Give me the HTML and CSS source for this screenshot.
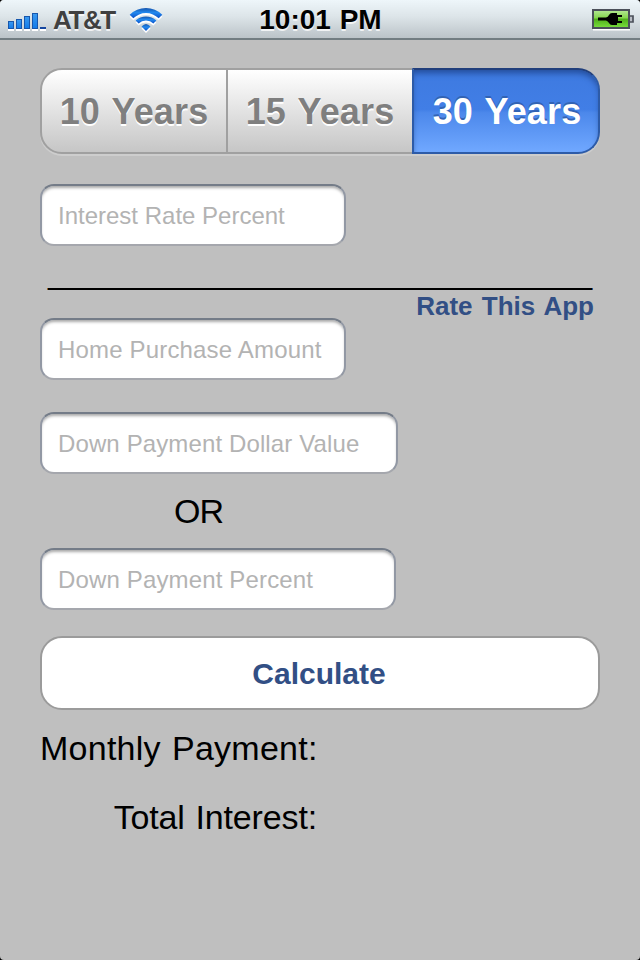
FILE: index.html
```html
<!DOCTYPE html>
<html lang="en">
<head>
<meta charset="utf-8">
<title>Mortgage Calculator</title>
<link rel="stylesheet" href="styles.css">
</head>
<body>
<div class="screen">
  <header class="status">
    <div class="status-left">
      <svg class="signal" width="40" height="18" viewBox="0 0 40 18">
        <defs>
          <linearGradient id="bar" x1="0" y1="0" x2="0" y2="1"><stop offset="0" stop-color="#3b9af0"/><stop offset="1" stop-color="#117bea"/></linearGradient>
        </defs>
        <path d="M0 17h6M8 17h6M16 17h6M24 17h6M32 17h6" stroke="#fff" stroke-width="2"/>
        <g fill="url(#bar)" stroke="#1757ad" stroke-width="1">
          <rect x=".5" y="8.5" width="5" height="7"/>
          <rect x="8.5" y="6.5" width="5" height="9"/>
          <rect x="16.5" y="3.5" width="5" height="12"/>
          <rect x="24.5" y=".5" width="5" height="15"/>
        </g>
        <rect x="32" y="14" width="6" height="2" fill="#1547a0"/>
      </svg>
      <span class="carrier">AT&amp;T</span>
      <svg class="wifi" width="34" height="27" viewBox="0 0 34 27">
        <defs>
          <linearGradient id="wave" x1="0" y1="0" x2="0" y2="1"><stop offset="0" stop-color="#1554ad"/><stop offset=".45" stop-color="#2389ee"/><stop offset="1" stop-color="#0b50c8"/></linearGradient>
        </defs>
        <g fill="#fff" transform="translate(0 2)">
          <path d="M.7 7.700A23 23 0 0 1 33.300 7.700L29.700 11.300A18 18 0 0 0 4.300 11.300Z"/>
          <path d="M6.600 13.600A15 15 0 0 1 27.400 13.600L24.400 16.600A10.500 10.500 0 0 0 9.600 16.600Z"/>
          <path d="M12.500 19.500Q17 14.500 21.500 19.500L17 24Z"/>
        </g>
        <g fill="url(#wave)">
          <path d="M.7 7.700A23 23 0 0 1 33.300 7.700L29.700 11.300A18 18 0 0 0 4.300 11.300Z"/>
          <path d="M6.600 13.600A15 15 0 0 1 27.400 13.600L24.400 16.600A10.500 10.500 0 0 0 9.600 16.600Z"/>
          <path d="M12.500 19.500Q17 14.500 21.500 19.500L17 24Z"/>
        </g>
      </svg>
    </div>
    <span class="clock">10:01 PM</span>
    <svg class="battery" width="43" height="22" viewBox="0 0 43 22">
      <defs>
        <linearGradient id="cell" x1="0" y1="0" x2="0" y2="1"><stop offset="0" stop-color="#b5e896"/><stop offset=".45" stop-color="#84d64c"/><stop offset=".5" stop-color="#4eae19"/><stop offset="1" stop-color="#7be03f"/></linearGradient>
      </defs>
      <path d="M1 20.700h37" stroke="#fff" stroke-width="1.400"/>
      <rect x="1" y="1" width="36" height="18" fill="url(#cell)" stroke="#4b505a" stroke-width="2"/>
      <path d="M38 7h3v6h-3" fill="#b8bcc4" stroke="#4b505a" stroke-width="1.700"/>
      <path d="M6 8.500h8q2-.5 3-2.500t3-2h5v2h5v2h-4v4h4v2h-5v2h-5q-2 0-3-2t-3-2.500H6z" fill="#000"/>
    </svg>
  </header>

  <main class="form">
    <div class="segments">
      <button class="segment">10 Years</button>
      <button class="segment">15 Years</button>
      <button class="segment selected">30 Years</button>
    </div>

    <input class="field rate" placeholder="Interest Rate Percent">
    <div class="rule">_________________________________</div>
    <a class="rate-link">Rate This App</a>
    <input class="field home" placeholder="Home Purchase Amount">
    <input class="field dollars" placeholder="Down Payment Dollar Value">
    <div class="or">OR</div>
    <input class="field percent" placeholder="Down Payment Percent">
    <button class="calculate">Calculate</button>

    <div class="results">
      <div class="result monthly">Monthly Payment:</div>
      <div class="result total">Total Interest:</div>
    </div>
  </main>
</div>
</body>
</html>
```
FILE: styles.css
```css
* { box-sizing: border-box; }

body {
  margin: 0;
  background: #000;
  font-family: "Liberation Sans", Arial, sans-serif;
}

.screen {
  width: 640px;
  height: 960px;
  overflow: hidden;
  background: #bfbfbf;
  border-radius: 4px;
  color: #000;
}

.status {
  display: grid;
  grid-template-columns: 1fr auto 1fr;
  align-items: start;
  height: 40px;
  padding: 0 5px 0 8px;
  background: linear-gradient(#eef6fa, #dce4e8 45%, #bbc3c8);
  border-bottom: 2px solid #727d82;
  font-weight: bold;
  line-height: 40px;
  text-shadow: 0 2px 0 rgba(255, 255, 255, .75);
}

.status-left { display: flex; }
.signal { margin-top: 13px; }

.carrier {
  width: 63px;
  margin-left: 5px;
  color: #404040;
  font-size: 26px;
  letter-spacing: -1.4px;
}

.wifi { margin: 7px 0 0 13px; }
.clock { margin-right: 2px; font-size: 28px; word-spacing: 1px; }
.battery { justify-self: end; margin: 9px 0 0; }

.form {
  display: flex;
  flex-direction: column;
  align-items: flex-start;
  padding: 28px 40px 0;
}

button, input {
  margin: 0;
  padding: 0;
  border: 0;
  font-family: inherit;
}

.segments {
  display: grid;
  grid-template-columns: 188px 184px 188px;
  width: 560px;
  height: 86px;
  border-radius: 22px;
  box-shadow: 0 2px 0 #cdcdcd;
}

.segment {
  padding-top: 2px;
  background: linear-gradient(#fff, #c6c6c6);
  border: solid #a0a0a0;
  border-width: 2px 2px 2px 0;
  color: #7f7f7f;
  font-size: 36px;
  font-weight: bold;
  text-shadow: 0 2px 0 #fff;
  letter-spacing: .15px;
  word-spacing: 2px;
}

.segment:first-child { border-left-width: 2px; border-radius: 22px 0 0 22px; }
.segment:nth-child(2) { border-right: 0; }

.segment.selected {
  padding-left: 2px;
  background: linear-gradient(#3e7ae0, #417ee6 48%, #4c88eb 52%, #70a8ff);
  border: 2px solid #2d5ba8;
  border-top-color: #213f7c;
  border-radius: 0 22px 22px 0;
  box-shadow: inset 0 5px 6px -2px #234c99;
  color: #fff;
  text-shadow: 0 -2px 0 #3263b4;
}

.field {
  width: 306px;
  height: 62px;
  padding: 2px 16px 0;
  background: #fff;
  border: 2px solid #9298a4;
  border-top-color: #747c88;
  border-bottom-color: #a5a7ad;
  border-radius: 14px;
  box-shadow: inset 0 3px 3px -1px #aaa;
  font-size: 24px;
}

.field::placeholder { color: #b3b3b3; opacity: 1; }

.rate { margin-top: 30px; }
.home { letter-spacing: .17px; }
.dollars { width: 358px; margin-top: 32px; letter-spacing: .12px; }
.percent { width: 356px; margin-top: 20px; letter-spacing: .15px; }

.rule {
  height: 46px;
  margin-left: 8px;
  font-size: 30px;
  line-height: 56px;
  letter-spacing: -.2px;
}

.rate-link {
  align-self: flex-end;
  height: 26px;
  margin-right: 6px;
  color: #324f85;
  font-size: 26px;
  font-weight: bold;
  line-height: 28px;
  word-spacing: 2px;
}

.or {
  width: 317px;
  height: 54px;
  padding-top: 10px;
  text-align: center;
  font-size: 34px;
  letter-spacing: -1px;
  line-height: 54px;
}

.calculate {
  width: 560px;
  height: 74px;
  margin-top: 26px;
  padding: 2px 2px 0 0;
  background: #fff;
  border: 2px solid #9b9b9b;
  border-radius: 22px;
  color: #324f85;
  font-size: 30px;
  font-weight: bold;
}

.results {
  width: 277px;
  margin-top: 18px;
  text-align: right;
  font-size: 34px;
}

.result { height: 69px; line-height: 40px; white-space: nowrap; }
.monthly { letter-spacing: .25px; word-spacing: 1.5px; }
.total { letter-spacing: -.15px; word-spacing: 1.5px; }
```
